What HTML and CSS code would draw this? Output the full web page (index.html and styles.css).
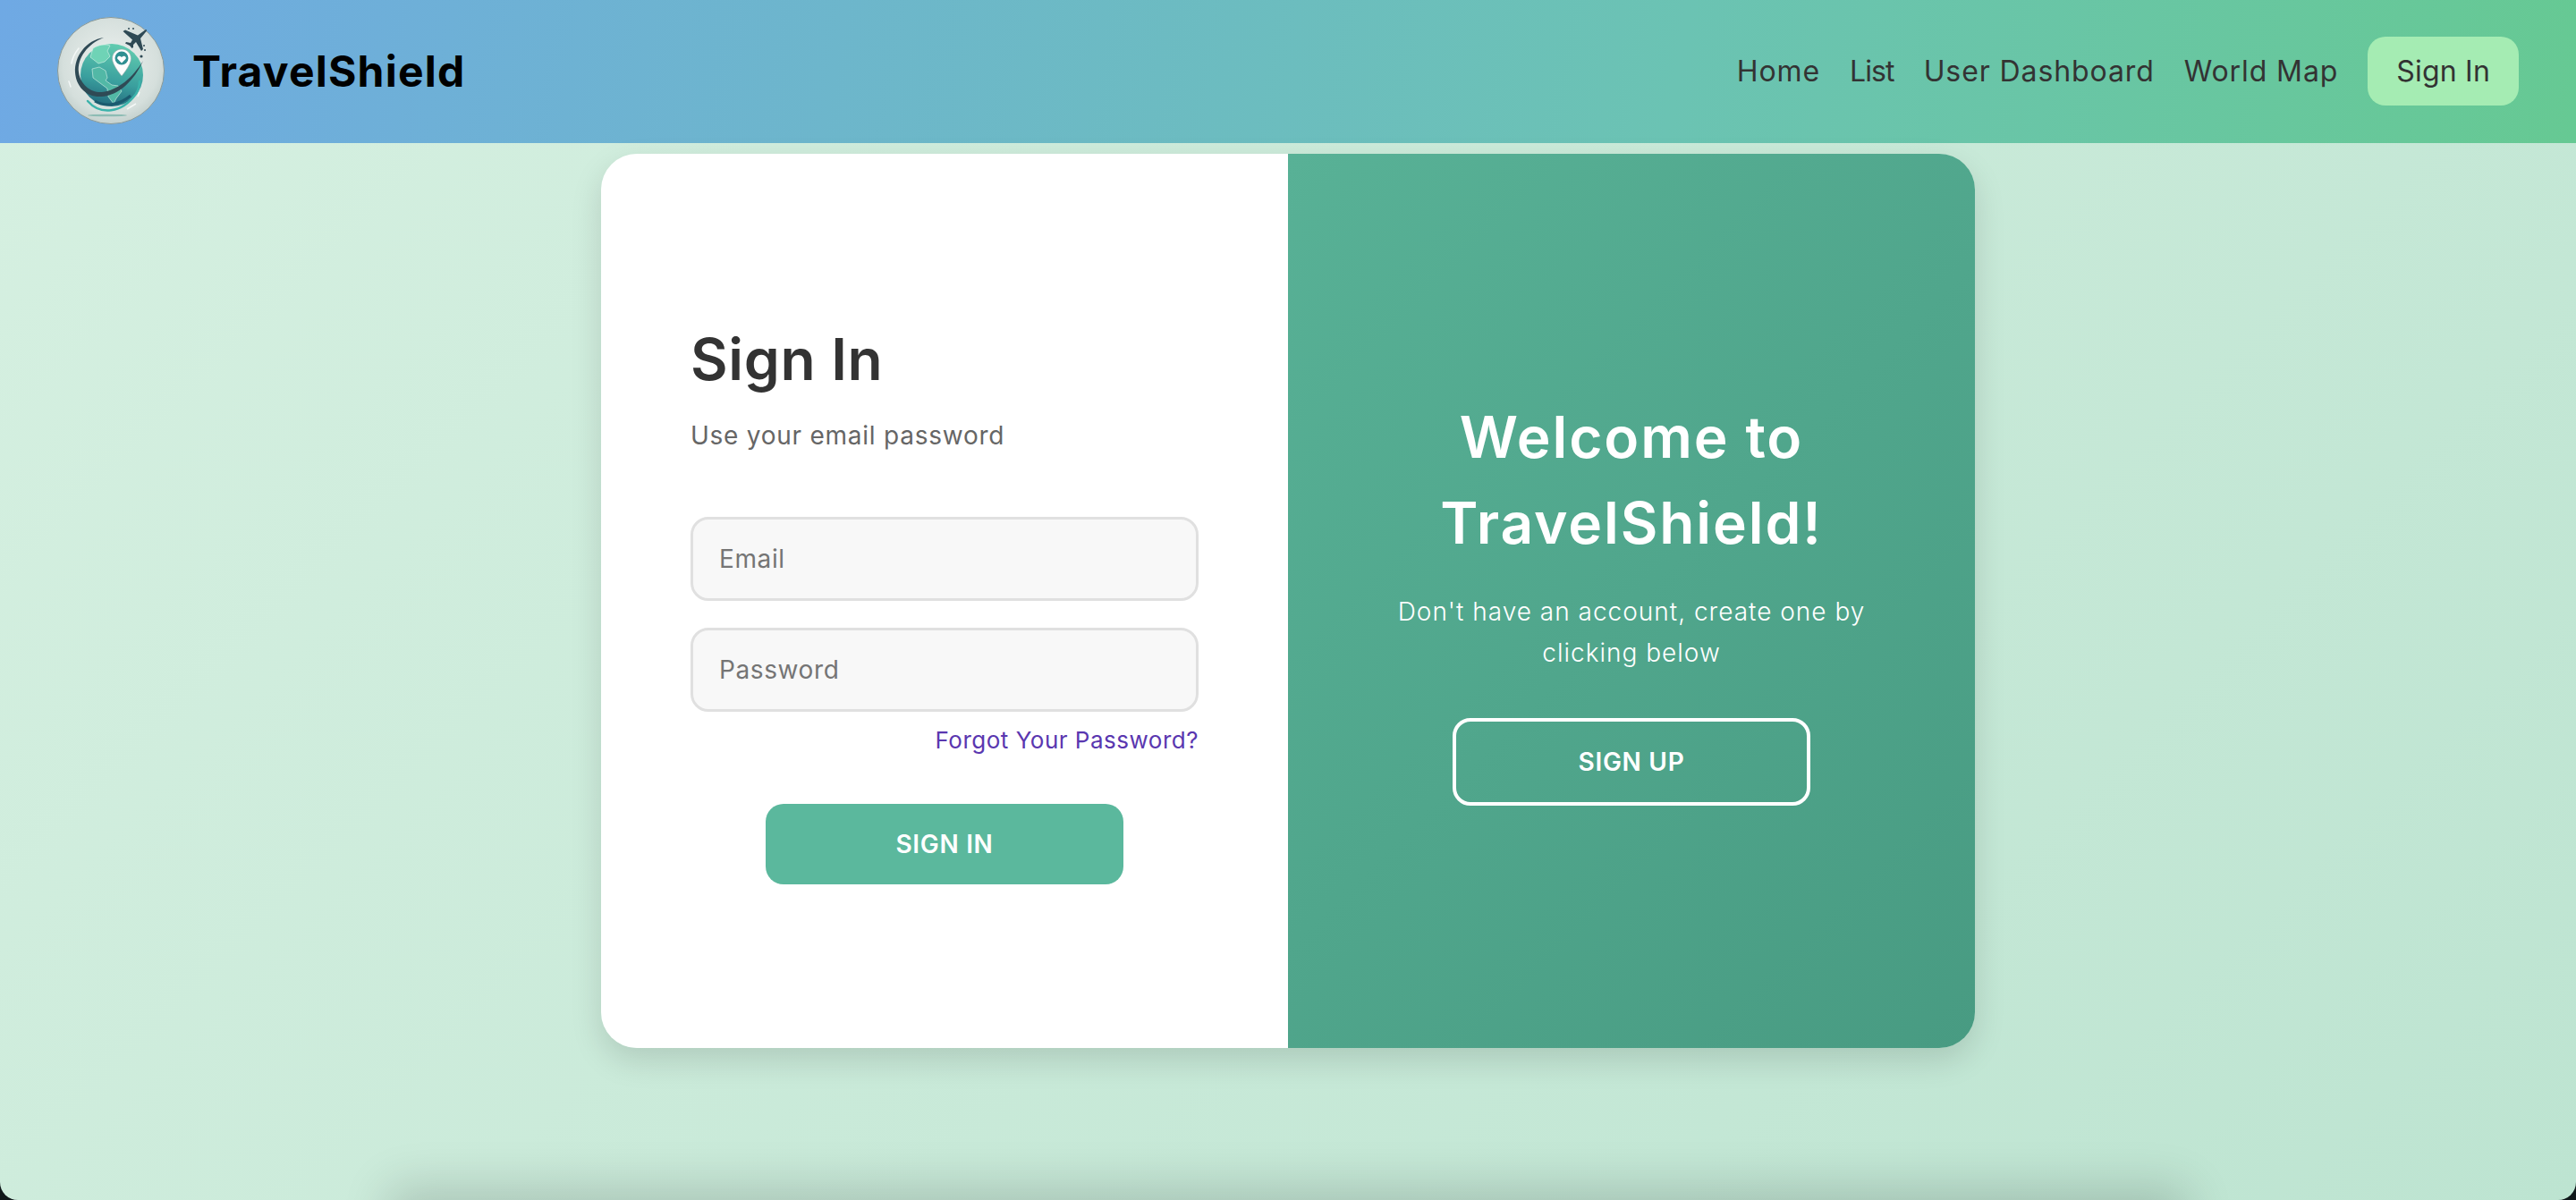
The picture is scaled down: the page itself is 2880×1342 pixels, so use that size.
FILE: index.html
```html
<!DOCTYPE html>
<html lang="en">
<head>
    <meta charset="UTF-8">
    <meta name="viewport" content="width=device-width, initial-scale=1.0">
    <title>TravelShield - Sign In</title>
    <link rel="stylesheet" href="styles.css">
</head>
<body>

    <nav class="navbar">
        <a class="brand" href="#">
            <svg class="logo" viewBox="0 0 120 120" aria-hidden="true">
                <defs>
                    <radialGradient id="disc" cx="50%" cy="45%" r="60%">
                        <stop offset="0" stop-color="#eef2f0"/>
                        <stop offset="0.75" stop-color="#d5dfdc"/>
                        <stop offset="1" stop-color="#bccac7"/>
                    </radialGradient>
                    <linearGradient id="globe" x1="0.6" y1="0" x2="0.4" y2="1">
                        <stop offset="0" stop-color="#62cdb0"/>
                        <stop offset="0.6" stop-color="#3a9f9e"/>
                        <stop offset="1" stop-color="#22697c"/>
                    </linearGradient>
                </defs>
                <circle cx="60" cy="60" r="59.5" fill="url(#disc)" stroke="#8a9a98" stroke-width="1"/>
                <circle cx="61" cy="65" r="35" fill="url(#globe)"/>
                <path d="M40 35c6-4 14-5 19-3l-3 6 3 6-6 6-7 2-5-4-4-3z" fill="#6fd3b6" stroke="#d9f3ea" stroke-width="0.6"/>
                <path d="M39 58l8-2 7 4 2 8-2 3 7 5 7 1 4 6-6 8-3 6-6-8-1-9-8-6-8-6z" fill="#52b8a6" stroke="#d9f3ea" stroke-width="0.6"/>
                <path d="M42 94c10 6 26 6 40-6" fill="none" stroke="#1b5a6e" stroke-width="3"/>
                <path d="M34 94c14 16 38 14 54-8 3-5 4-10 4-14" fill="none" stroke="#3cb3ab" stroke-width="2.5" stroke-linecap="round"/>
                <path d="M88 97l-10 6M92 84l-2 5" fill="none" stroke="#f4f8f7" stroke-width="1.5"/>
                <path d="M52 23C32 26 19 44 20 62c1 16 13 28 29 27 20-1 37-18 47-40-12 19-28 33-46 35-12 1-24-8-26-22-2-16 10-32 28-39z" fill="#2f4a55"/>
                <path d="M16 52c1-7 4-12 8-17M13 72l2 6" fill="none" stroke="#f4f8f7" stroke-width="1.5" stroke-linecap="round"/>
                <path d="M72 36c-6 0-10.500 4.500-10.500 10.500C61.500 54 72 66 72 66s10.500-12 10.500-19.500C82.500 40.500 78 36 72 36z" fill="#fdfdfd" stroke="#8fa5a5" stroke-width="0.6"/>
                <circle cx="72" cy="46" r="7.500" fill="#2f8f91"/>
                <path d="M72 51.500l-4.200-4.300c-2.200-2.400 1.600-5.200 4.200-2.300 2.600-2.900 6.400-.1 4.200 2.300z" fill="#fff"/>
                <path d="M99 14L90 20.500 76 14.500 73.500 16 84 25.500 82 29 77 28 76 29.500 81 32 83.500 35 85 34 85 31 88 28 94 38 96 36 93 24 100 15.500Q100 13.500 99 14z" fill="#2f4a55"/>
                <g fill="#2f4a55">
                    <circle cx="80" cy="13" r="1"/>
                    <circle cx="85" cy="13" r="1"/>
                    <circle cx="97" cy="32" r="1"/>
                    <circle cx="98" cy="37" r="1"/>
                    <circle cx="94" cy="44" r="1.600"/>
                </g>
                <ellipse cx="56" cy="110" rx="22" ry="1.300" fill="#8dbcb4"/>
            </svg>
            <span class="brand-name">TravelShield</span>
        </a>
        <ul class="nav-links">
            <li><a href="#">Home</a></li>
            <li><a class="nav-list" href="#">List</a></li>
            <li><a href="#">User Dashboard</a></li>
            <li><a href="#">World Map</a></li>
            <li><a class="nav-signin" href="#">Sign In</a></li>
        </ul>
    </nav>

    <main class="main">
        <div class="card">
            <form class="signin-panel">
                <h1>Sign In</h1>
                <p class="subtitle">Use your email password</p>
                <input type="email" placeholder="Email">
                <input type="password" placeholder="Password">
                <a class="forgot" href="#">Forgot Your Password?</a>
                <button type="button" class="btn-signin">SIGN IN</button>
            </form>
            <div class="welcome-panel">
                <h2>Welcome to TravelShield!</h2>
                <p>Don't have an account, create one by clicking below</p>
                <button type="button" class="btn-signup">SIGN UP</button>
            </div>
        </div>
    </main>

    <footer class="footer"></footer>

</body>
</html>
```

FILE: styles.css
```css
* {
    box-sizing: border-box;
}
html {
    background: #10181a;
}
body {
    margin: 0;
    height: 100vh;
    overflow: hidden;
    font-family: Inter, "Noto Sans", sans-serif;
    color: #333;
    background: linear-gradient(135deg, #d6f0e1, #bde4d1);
    border-radius: 0 0 20px 20px;
}

/* navbar */
.navbar {
    height: 160px;
    padding: 0 64px 2px;
    display: flex;
    align-items: center;
    justify-content: space-between;
    background: linear-gradient(100deg, #6fa9e4, #6bc3b3 65%, #66c993);
}
.brand {
    display: flex;
    align-items: center;
    gap: 31px;
    text-decoration: none;
}
.logo {
    width: 120px;
    height: 120px;
}
.brand-name {
    font-size: 48px;
    font-weight: 700;
    color: #000;
    letter-spacing: 1.2px;
}
.nav-links {
    display: flex;
    align-items: center;
    gap: 33px;
    list-style: none;
    margin: 0;
    padding: 0;
}
.nav-links a {
    font-size: 32px;
    color: #333;
    text-decoration: none;
    letter-spacing: 0.9px;
}
.nav-links .nav-list {
    letter-spacing: -0.9px;
}
.nav-links .nav-signin {
    display: block;
    padding: 0 32px;
    height: 77px;
    line-height: 77px;
    border-radius: 20px;
    background: #a5ecb3;
    letter-spacing: 0.2px;
}

/* card */
.main {
    height: 1182px;
    padding-top: 12px;
}
.card {
    width: 1536px;
    height: 1000px;
    margin: 0 auto;
    display: flex;
    border-radius: 40px;
    overflow: hidden;
    box-shadow: 0 14px 35px rgba(0, 0, 0, 0.13);
}
.signin-panel {
    width: 768px;
    padding: 0 100px 2px;
    background: #fff;
    display: flex;
    flex-direction: column;
    justify-content: center;
}
.signin-panel h1 {
    margin: 0;
    font-size: 64px;
    font-weight: 600;
    line-height: 96px;
    color: #333;
    letter-spacing: 0.7px;
}
.subtitle {
    margin: 16px 0 70px;
    font-size: 28px;
    line-height: 42px;
    color: #666;
    letter-spacing: 0.75px;
}
.signin-panel input {
    display: block;
    width: 100%;
    height: 94px;
    margin-bottom: 30px;
    padding: 0 29px;
    font-family: inherit;
    font-size: 28px;
    letter-spacing: 0.6px;
    background: #f8f8f8;
    border: 3px solid #e0e0e0;
    border-radius: 20px;
}
.signin-panel input::placeholder {
    color: #757575;
}
.forgot {
    align-self: flex-end;
    margin-top: -18px;
    font-size: 26px;
    line-height: 40px;
    letter-spacing: 0.5px;
    color: #5a37b0;
    text-decoration: none;
}
.btn-signin,
.btn-signup {
    width: 400px;
    font-family: inherit;
    font-size: 28px;
    font-weight: 600;
    letter-spacing: 0.7px;
    border-radius: 20px;
    color: #fff;
    cursor: pointer;
}
.btn-signin {
    height: 90px;
    margin-top: 51px;
    align-self: center;
    border: none;
    background: #5bb89d;
}

/* right side */
.welcome-panel {
    width: 768px;
    padding: 0 90px 2px;
    background: linear-gradient(135deg, #58b196, #489b82);
    color: #fff;
    display: flex;
    flex-direction: column;
    align-items: center;
    justify-content: center;
    text-align: center;
}
.welcome-panel h2 {
    margin: 0;
    padding: 0 50px;
    font-size: 64px;
    font-weight: 600;
    line-height: 96px;
    letter-spacing: 1.9px;
}
.welcome-panel p {
    margin: 28px 0 50px;
    font-size: 28px;
    font-weight: 300;
    line-height: 46px;
    letter-spacing: 1px;
}
.btn-signup {
    height: 98px;
    background: transparent;
    border: 4px solid #fff;
}

/* only its shadow shows above the fold */
.footer {
    width: 2010px;
    height: 200px;
    margin: 0 auto;
    background: #b5d5c5;
    box-shadow: 0 -14px 50px rgba(0, 0, 0, 0.16);
}
```
